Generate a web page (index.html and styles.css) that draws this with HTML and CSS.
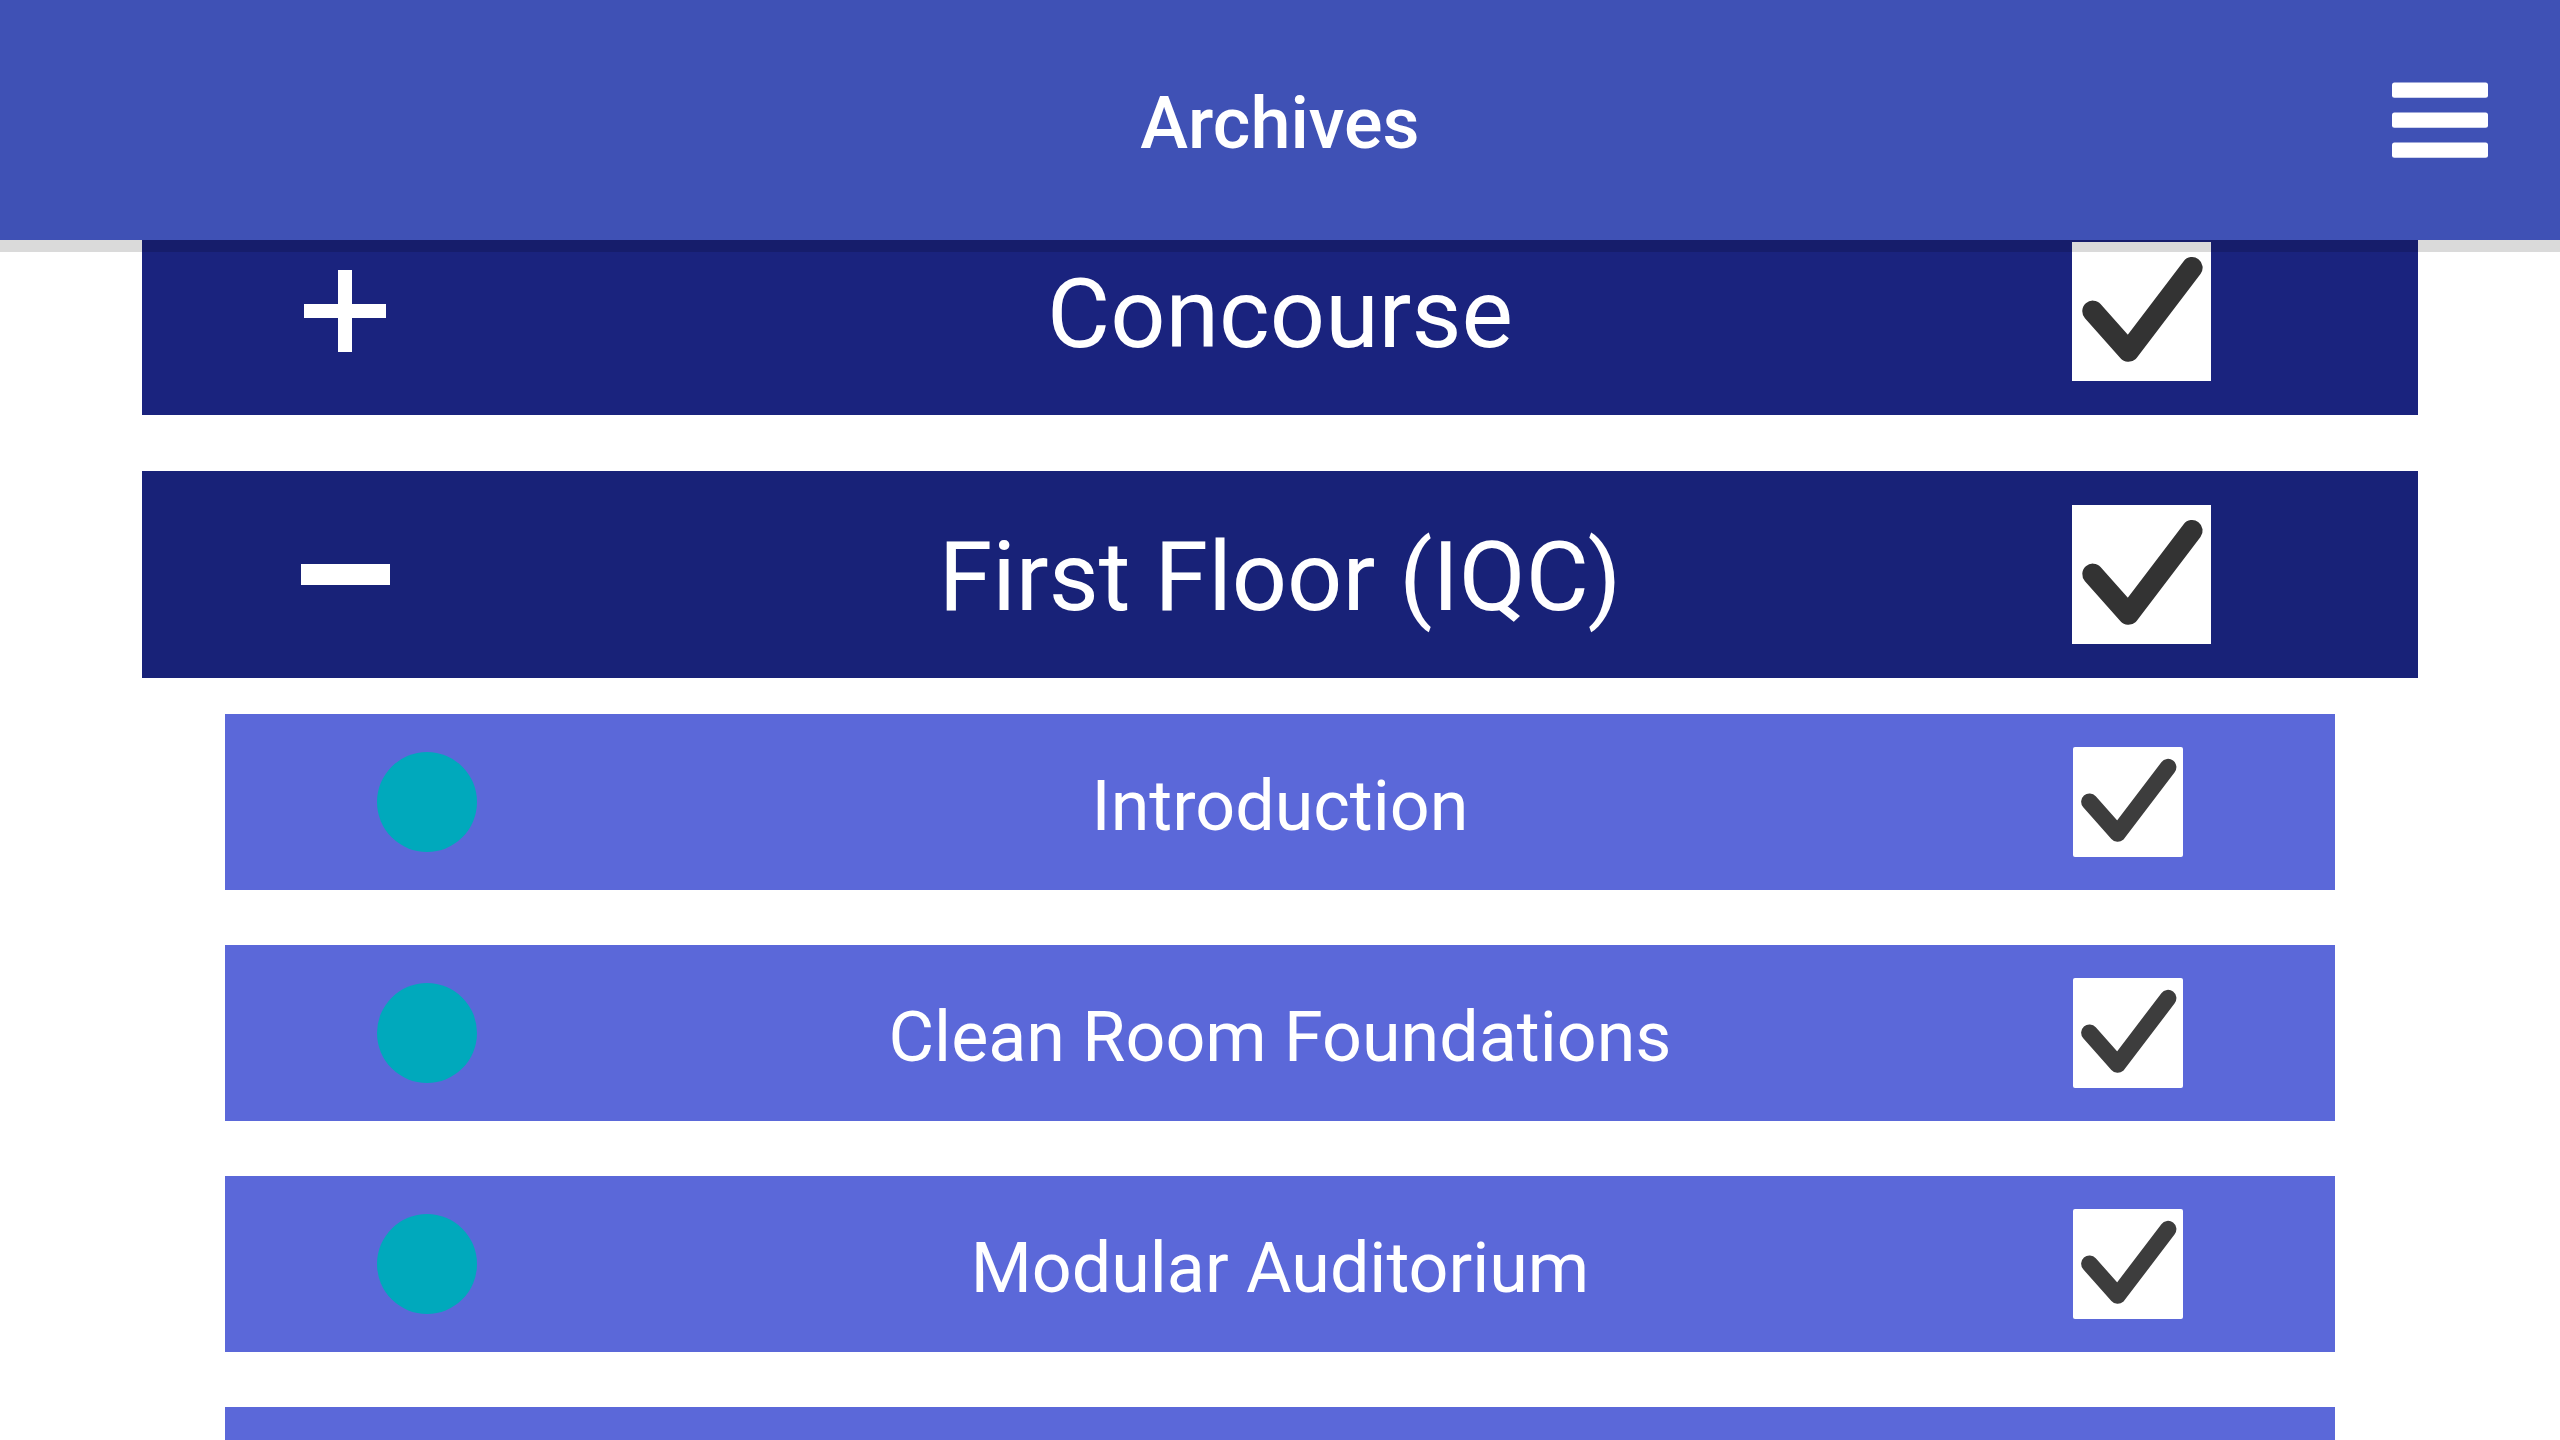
FILE: index.html
```html
<!DOCTYPE html>
<html lang="en">
<head>
  <meta charset="utf-8">
  <meta name="viewport" content="width=device-width, initial-scale=1">
  <title>Archives</title>
  <link rel="stylesheet" href="styles.css">
</head>
<body>
  <svg class="sprite" aria-hidden="true">
    <symbol id="tick" viewBox="0 0 138 138">
      <path d="M20.7 68.7 56 108.5 119.2 25.4" fill="none" stroke="currentColor" stroke-width="21" stroke-linecap="round" stroke-linejoin="round"/>
    </symbol>
  </svg>

  <header class="topbar">
    <h1 class="topbar-title">Archives</h1>
    <button class="menu" type="button" aria-label="Menu">
      <svg width="96" height="76" viewBox="0 0 96 76" fill="currentColor" aria-hidden="true">
        <rect y=".4" width="96" height="15.3" rx="2.5"/>
        <rect y="30.4" width="96" height="15.3" rx="2.5"/>
        <rect y="60.4" width="96" height="15.3" rx="2.5"/>
      </svg>
    </button>
  </header>

  <main class="content">
    <ul class="floors">
      <li class="row floor">
        <button class="toggle" type="button" aria-label="Expand Concourse">
          <svg width="82" height="83" viewBox="0 0 82 83" fill="currentColor" aria-hidden="true">
            <path d="M34 0h14v34h34v14H48v34H34V48H0V34h34z"/>
          </svg>
        </button>
        <label class="label" for="concourse">Concourse</label>
        <span class="check">
          <input type="checkbox" id="concourse" checked>
          <svg aria-hidden="true"><use href="#tick"/></svg>
        </span>
      </li>
      <li>
        <div class="row floor open">
          <button class="toggle" type="button" aria-label="Collapse First Floor (IQC)" aria-expanded="true">
            <svg width="90" height="21" viewBox="0 0 90 21" fill="currentColor" aria-hidden="true">
              <path d="M1 0h89v21H1z"/>
            </svg>
          </button>
          <label class="label" for="first-floor">First Floor (IQC)</label>
          <span class="check">
            <input type="checkbox" id="first-floor" checked>
            <svg aria-hidden="true"><use href="#tick"/></svg>
          </span>
        </div>
        <ul class="stops">
          <li class="row stop">
            <span class="dot"></span>
            <label class="label" for="introduction">Introduction</label>
            <span class="check">
              <input type="checkbox" id="introduction" checked>
              <svg aria-hidden="true"><use href="#tick"/></svg>
            </span>
          </li>
          <li class="row stop">
            <span class="dot"></span>
            <label class="label" for="clean-room">Clean Room Foundations</label>
            <span class="check">
              <input type="checkbox" id="clean-room" checked>
              <svg aria-hidden="true"><use href="#tick"/></svg>
            </span>
          </li>
          <li class="row stop">
            <span class="dot"></span>
            <label class="label" for="auditorium">Modular Auditorium</label>
            <span class="check">
              <input type="checkbox" id="auditorium" checked>
              <svg aria-hidden="true"><use href="#tick"/></svg>
            </span>
          </li>
          <li class="row stop"></li>
        </ul>
      </li>
    </ul>
  </main>
</body>
</html>
```

FILE: styles.css
```css
* {
  box-sizing: border-box;
}

body {
  display: flex;
  flex-direction: column;
  height: 100vh;
  margin: 0;
  overflow: hidden;
  background: #fff;
  color: #fff;
  font-family: Roboto, sans-serif;
}

ul {
  margin: 0;
  padding: 0;
  list-style: none;
}

button {
  display: flex;
  padding: 0;
  border: 0;
  background: none;
  color: inherit;
  cursor: pointer;
}

.sprite {
  display: none;
}

/* Top bar */
.topbar {
  display: grid;
  grid-template-columns: 1fr auto 1fr;
  flex: none;
  align-items: center;
  min-height: 240px;
  padding: 0 72px;
  background: #3f51b5;
  box-shadow: 0 12px 0 rgba(0, 0, 0, 0.145);
  z-index: 1;
}

.topbar-title {
  grid-column: 2;
  margin: 0;
  padding-top: 8px;
  font-size: 72px;
  font-weight: 500;
  line-height: 84px;
}

.menu {
  justify-self: end;
}

/* Scrolled list: the first row is partly under the top bar */
.content {
  flex: 1;
  min-height: 0;
  overflow: hidden;
}

.floors {
  display: grid;
  gap: 56px;
  margin-top: -32px;
  padding: 0 142px;
}

.stops {
  display: grid;
  gap: 55px;
  padding: 36px 83px;
}

.row {
  display: grid;
  grid-template-columns: 1fr auto 1fr;
  align-items: center;
}

.floor {
  min-height: 207px;
  padding: 0 158px;
  background: #1a237e;
  font-size: 97px;
  line-height: 111px;
}

.floor.open {
  background: #182278;
}

.stop {
  min-height: 176px;
  padding: 0 152px;
  background: #5b68d9;
  font-size: 70px;
  line-height: 82px;
}

.label {
  padding-top: 8px;
}

.floor .label {
  padding-top: 6px;
}

.toggle {
  justify-content: center;
  width: 90px;
}

.dot {
  width: 100px;
  height: 100px;
  border-radius: 50%;
  background: #00a9bc;
}

/* Tick boxes */
.check {
  display: grid;
  justify-self: end;
  width: 110px;
  height: 110px;
  color: #3d3d3d;
}

.floor .check {
  width: 139px;
  height: 139px;
  margin-right: 49px;
  color: #333;
}

.check input,
.check svg {
  grid-area: 1 / 1;
  width: 100%;
  height: 100%;
  margin: 0;
}

.check input {
  appearance: none;
  background: #fff;
}

.stop .check input {
  border-radius: 2px;
}

.check svg {
  visibility: hidden;
  pointer-events: none;
}

.check input:checked + svg {
  visibility: visible;
}
```
